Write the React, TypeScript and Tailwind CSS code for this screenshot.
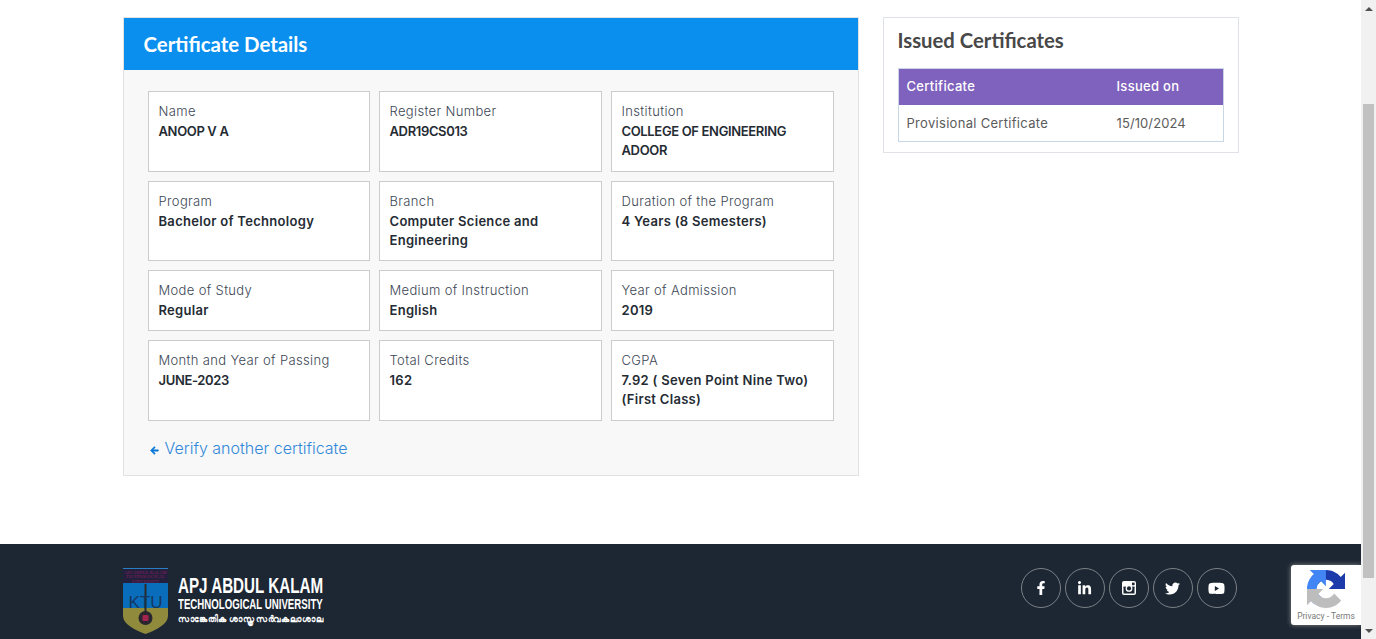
import React from 'react'
import { FaFacebookF, FaLinkedinIn, FaTwitter, FaYoutube, FaArrowLeft } from 'react-icons/fa'

const details = [
  { label: 'Name', value: 'ANOOP V A', caps: true },
  { label: 'Register Number', value: 'ADR19CS013', caps: true },
  { label: 'Institution', value: 'COLLEGE OF ENGINEERING ADOOR', caps: true },
  { label: 'Program', value: 'Bachelor of Technology' },
  { label: 'Branch', value: 'Computer Science and Engineering' },
  { label: 'Duration of the Program', value: '4 Years (8 Semesters)' },
  { label: 'Mode of Study', value: 'Regular' },
  { label: 'Medium of Instruction', value: 'English' },
  { label: 'Year of Admission', value: '2019' },
  { label: 'Month and Year of Passing', value: 'JUNE-2023', caps: true },
  { label: 'Total Credits', value: '162' },
  { label: 'CGPA', value: '7.92 ( Seven Point Nine Two) (First Class)' },
]

const InstagramIcon = () => (
  <svg width="14" height="14" viewBox="0 0 14 14">
    <rect width="14" height="14" rx="2" fill="#fff" />
    <rect x="1.5" y="6" width="11" height="6.5" fill="#1d2733" />
    <rect x="1.5" y="5.6" width="3" height="1" fill="#1d2733" />
    <rect x="9.5" y="5.6" width="3" height="1" fill="#1d2733" />
    <circle cx="7" cy="7.4" r="3.4" fill="#fff" />
    <circle cx="7" cy="7.4" r="2.1" fill="#1d2733" />
    <rect x="10" y="1.6" width="2.6" height="2.6" fill="#1d2733" />
  </svg>
)

const socials = [
  <FaFacebookF key="fb" size={14} />,
  <FaLinkedinIn key="in" size={15} />,
  <InstagramIcon key="ig" />,
  <FaTwitter key="tw" size={15} />,
  <FaYoutube key="yt" size={17} />,
]

const Logo = () => (
  <svg width="45" height="66" viewBox="0 0 45 66" className="shrink-0">
    <rect x="0" y="0" width="45" height="1" fill="#2a7fc0" />
    <rect x="0" y="1" width="45" height="14" fill="#22203c" />
    <text x="22.5" y="5.5" textAnchor="middle" fontSize="4.6" fill="#8a1f5c" fontFamily="Liberation Serif">APJ ABDUL KALAM</text>
    <text x="22.5" y="10" textAnchor="middle" fontSize="4.6" fill="#8a1f5c" fontFamily="Liberation Serif">TECHNOLOGICAL</text>
    <text x="22.5" y="14.5" textAnchor="middle" fontSize="4.6" fill="#8a1f5c" fontFamily="Liberation Serif">UNIVERSITY</text>
    <rect x="0" y="15" width="45" height="25" fill="#0a6dbb" />
    <path d="M0 40 H45 V48 C45 56 33 62 22.5 66 C12 62 0 56 0 48 Z" fill="#8f8a3c" />
    <rect x="21.5" y="16" width="2" height="28" fill="#2b2a2a" />
    <text x="22.5" y="39.5" textAnchor="middle" fontSize="17" fill="#15375f" fontFamily="Liberation Sans">KTU</text>
    <circle cx="22.5" cy="50" r="7" fill="#2a2630" />
    <rect x="19.5" y="47" width="6" height="6" rx="1" fill="#a3244f" />
  </svg>
)

const RecaptchaIcon = () => (
  <svg width="38" height="38" viewBox="0 0 64 64">
    <path d="M64 31.955l-.033-1.37V4.687l-7.16 7.16C50.948 4.674 42.033.093 32.05.093c-10.4 0-19.622 4.96-25.458 12.64l11.736 11.86a15.55 15.55 0 0 1 4.754-5.334c2.05-1.6 4.952-2.906 8.968-2.906.485 0 .86.057 1.135.163 4.976.393 9.288 3.14 11.828 7.124l-8.307 8.307L64 31.953" fill="#1c3aa9" />
    <path d="M31.862.094l-1.37.033H4.594l7.16 7.16C4.58 13.147 0 22.06 0 32.046c0 10.4 4.96 19.622 12.64 25.458l11.86-11.736a15.55 15.55 0 0 1-5.334-4.754c-1.6-2.05-2.906-4.952-2.906-8.968 0-.485.057-.86.163-1.135.393-4.976 3.14-9.288 7.124-11.828l8.307 8.307L31.86.094" fill="#4285f4" />
    <path d="M.001 32.045l.033 1.37v25.898l7.16-7.16c5.86 7.173 14.774 11.754 24.76 11.754 10.4 0 19.622-4.96 25.458-12.64l-11.736-11.86a15.55 15.55 0 0 1-4.754 5.334c-2.05 1.6-4.952 2.906-8.968 2.906-.485 0-.86-.057-1.135-.163-4.976-.393-9.288-3.14-11.828-7.124l8.307-8.307c-10.522.001-22.4.027-29.3-.008" fill="#bdbdbd" />
  </svg>
)

const App: React.FC = () => {
  return (
    <div className="h-screen flex overflow-hidden bg-white font-['Liberation_Sans',sans-serif]">
      <div className="relative flex-1 flex flex-col overflow-hidden">
        <main className="h-[544px] shrink-0 pt-[17px]">
          <div className="w-[1116px] mx-auto flex items-start justify-between">
            <section className="w-[736px] h-[459px] border border-[#e2e2e2] bg-[#f8f8f8]">
              <h1 className="h-[52px] pl-5 flex items-center bg-[#0a8fef] text-white text-[20.4px] font-bold font-['Lato',sans-serif]">
                Certificate Details
              </h1>
              <div className="px-6 pt-[21px]">
                <div className="grid grid-cols-[222px_223px_223px] grid-rows-[81px_80px_61px_81px] gap-[9px] font-['Inter',sans-serif] text-[13px] leading-[19.6px]">
                  {details.map((item) => (
                    <div key={item.label} className="border border-[#cccccc] bg-white px-[10px] py-[10px]">
                      <div className="font-light text-[#3c4654] tracking-[0.35px]">{item.label}</div>
                      {item.caps ? (
                        <div className="font-semibold tracking-[-0.35px] text-[#252b33]">{item.value}</div>
                      ) : (
                        <div className="font-semibold text-[#252b33] tracking-[0.3px]">{item.value}</div>
                      )}
                    </div>
                  ))}
                </div>
                <a className="mt-[15px] ml-0.5 flex items-center text-[16px] leading-6 text-[#3188d8] font-['Inter',sans-serif] font-light">
                  <FaArrowLeft className="mr-[6px] mt-1 text-[#0a78d8]" size={9} strokeWidth={30} stroke="currentColor" />
                  Verify another certificate
                </a>
              </div>
            </section>
            <aside className="w-[356px] h-[136px] border border-[#dfe3e8] px-[14px] bg-white">
              <h2 className="mt-2 mb-[14px] text-[20.3px] leading-7 font-bold text-[#484848] font-['Lato',sans-serif]">
                Issued Certificates
              </h2>
              <table className="w-[326px] border border-[#c9d6e6] text-[13px] font-['Inter',sans-serif] border-separate border-spacing-0">
                <thead>
                  <tr className="h-[36px] bg-[#7f62bd] text-white text-left tracking-[0.3px]">
                    <th className="w-[210px] pl-2 pb-px font-medium">Certificate</th>
                    <th className="pl-2 pb-px font-medium">Issued on</th>
                  </tr>
                </thead>
                <tbody>
                  <tr className="h-[36px] text-[#5b5b5b]">
                    <td className="pl-2 pt-px font-normal tracking-[0.3px]">Provisional Certificate</td>
                    <td className="pl-2 pt-px font-normal tracking-[0.1px]">15/10/2024</td>
                  </tr>
                </tbody>
              </table>
            </aside>
          </div>
        </main>
        <footer className="flex-1 bg-[#1d2733] pt-6">
          <div className="w-[1116px] mx-auto flex justify-between items-start">
            <div className="flex items-start gap-[10px]">
              <Logo />
              <div className="text-white pt-[6px] whitespace-nowrap">
                <div className="origin-left scale-x-[0.69] text-[22px] leading-[23px] font-bold">APJ ABDUL KALAM</div>
                <div className="origin-left scale-x-[0.69] text-[14px] leading-[15px] font-bold">TECHNOLOGICAL UNIVERSITY</div>
                <div className="origin-left scale-x-[0.96] text-[8.5px] leading-[13px] font-bold font-['Noto_Sans',sans-serif]">സാങ്കേതിക ശാസ്ത്ര സർവകലാശാല</div>
              </div>
            </div>
            <div className="flex gap-1 pr-[2px]">
              {socials.map((icon, i) => (
                <a key={i} className="w-10 h-10 rounded-full border border-[#7b8087] flex items-center justify-center text-white">
                  {icon}
                </a>
              ))}
            </div>
          </div>
        </footer>
        <div className="absolute right-0 top-[565px] w-[70px] h-[60px] bg-white rounded-l-[3px] shadow-[0_0_5px_rgba(150,150,150,0.9)] flex flex-col items-center pt-[5px]">
          <RecaptchaIcon />
          <div className="mt-[3px] text-[8.5px] leading-[10px] text-[#7a7a7a] font-['Roboto',sans-serif] whitespace-nowrap">Privacy - Terms</div>
        </div>
      </div>
      <div className="w-[15px] shrink-0 bg-[#f1f1f1] flex flex-col items-center justify-between">
        <div className="w-full">
          <div className="h-[17px] flex items-center justify-center">
            <div className="w-0 h-0 border-x-[4px] border-x-transparent border-b-[4px] border-b-[#505050]" />
          </div>
          <div className="mt-[87px] ml-[2px] w-[11px] h-[474px] bg-[#c1c1c1]" />
        </div>
        <div className="h-[17px] flex items-center justify-center">
          <div className="w-0 h-0 border-x-[4px] border-x-transparent border-t-[4px] border-t-[#505050]" />
        </div>
      </div>
    </div>
  )
}

export default App
